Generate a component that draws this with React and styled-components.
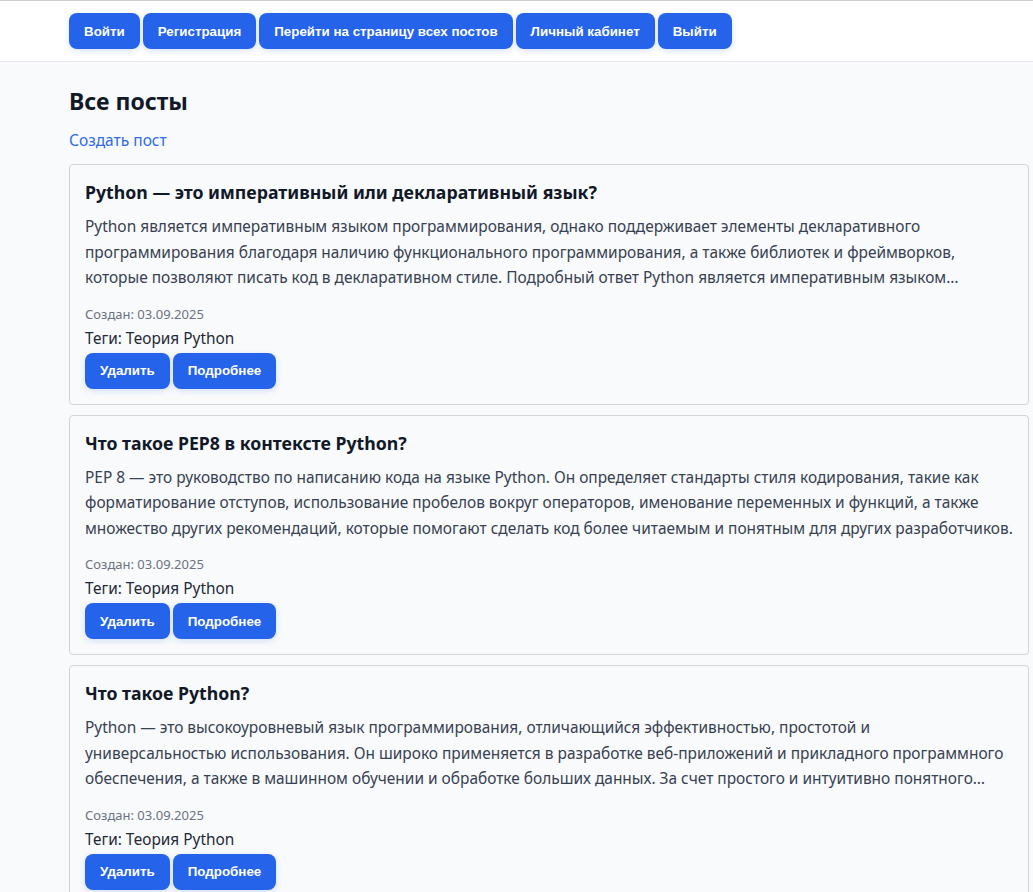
import styled, { createGlobalStyle } from "styled-components";

const GlobalStyle = createGlobalStyle`
    html, body {
        margin: 0;
        padding: 0;
        background: #f8fafc;
        font-family: "Noto Sans", "Open Sans", sans-serif;
        color: #1f2937;
    }
    * { box-sizing: border-box; }
`;

const Header = styled.header`
    background: #ffffff;
    border-top: 1px solid #cfcfcf;
    border-bottom: 1px solid #e5e7eb;
    padding: 12px 69px 12px;
    display: flex;
    gap: 3px;
`;

const Button = styled.button`
    background: #2563eb;
    color: #ffffff;
    border: none;
    border-radius: 8px;
    height: 36px;
    padding: 0 15px;
    font-family: "Liberation Sans", Arial, sans-serif;
    font-weight: 700;
    font-size: 13.35px;
    box-shadow: 0 2px 6px rgba(37, 99, 235, 0.18);
    cursor: pointer;
`;

const Main = styled.main`
    padding: 24px 4px 0 69px;
`;

const Title = styled.h1`
    margin: 0;
    font-size: 23px;
    font-weight: 700;
    line-height: 30px;
    color: #111827;
`;

const CreateLink = styled.a`
    display: block;
    margin-top: 14px;
    font-size: 15.5px;
    line-height: 20px;
    color: #2f6bea;
    text-decoration: none;
`;

const List = styled.div`
    margin-top: 14px;
    display: flex;
    flex-direction: column;
    gap: 10px;
`;

const Card = styled.article`
    border: 1px solid #d1d5db;
    border-radius: 4px;
    background: #f9fafb;
    padding: 15px 15px 15px;
`;

const PostTitle = styled.h3`
    margin: 0;
    font-size: 17.7px;
    line-height: 24px;
    font-weight: 700;
    color: #111827;
`;

// превью поста: не больше трёх строк
const PostText = styled.p`
    margin: 10px 0 0;
    font-size: 15.45px;
    line-height: 25.5px;
    color: #374151;
    display: -webkit-box;
    -webkit-line-clamp: 3;
    -webkit-box-orient: vertical;
    overflow: hidden;
`;

const Created = styled.div`
    margin-top: 14px;
    font-size: 13px;
    line-height: 19px;
    color: #6b7280;
`;

const Tags = styled.div`
    margin-top: 3px;
    font-size: 15.4px;
    line-height: 24px;
    color: #1f2937;
`;

const Actions = styled.div`
    margin-top: 2px;
    display: flex;
    gap: 3px;
`;

const posts = [
    {
        title: "Python — это императивный или декларативный язык?",
        text: "Python является императивным языком программирования, однако поддерживает элементы декларативного программирования благодаря наличию функционального программирования, а также библиотек и фреймворков, которые позволяют писать код в декларативном стиле. Подробный ответ Python является императивным языком…",
        date: "03.09.2025",
        tags: "Теория Python",
    },
    {
        title: "Что такое PEP8 в контексте Python?",
        text: "PEP 8 — это руководство по написанию кода на языке Python. Он определяет стандарты стиля кодирования, такие как форматирование отступов, использование пробелов вокруг операторов, именование переменных и функций, а также множество других рекомендаций, которые помогают сделать код более читаемым и понятным для других разработчиков.",
        date: "03.09.2025",
        tags: "Теория Python",
    },
    {
        title: "Что такое Python?",
        text: "Python — это высокоуровневый язык программирования, отличающийся эффективностью, простотой и универсальностью использования. Он широко применяется в разработке веб-приложений и прикладного программного обеспечения, а также в машинном обучении и обработке больших данных. За счет простого и интуитивно понятного…",
        date: "03.09.2025",
        tags: "Теория Python",
    },
];

function Post(props) {
    return (
        <Card>
            <PostTitle>{props.title}</PostTitle>
            <PostText>{props.text}</PostText>
            <Created>Создан: {props.date}</Created>
            <Tags>Теги: {props.tags}</Tags>
            <Actions>
                <Button>Удалить</Button>
                <Button>Подробнее</Button>
            </Actions>
        </Card>
    );
}

export default function App() {
    return (
        <>
            <GlobalStyle />
            <Header>
                <Button>Войти</Button>
                <Button>Регистрация</Button>
                <Button>Перейти на страницу всех постов</Button>
                <Button>Личный кабинет</Button>
                <Button>Выйти</Button>
            </Header>
            <Main>
                <Title>Все посты</Title>
                <CreateLink href="#">Создать пост</CreateLink>
                <List>
                    {posts.map((post, i) => (
                        <Post key={i} {...post} />
                    ))}
                </List>
            </Main>
        </>
    );
}
